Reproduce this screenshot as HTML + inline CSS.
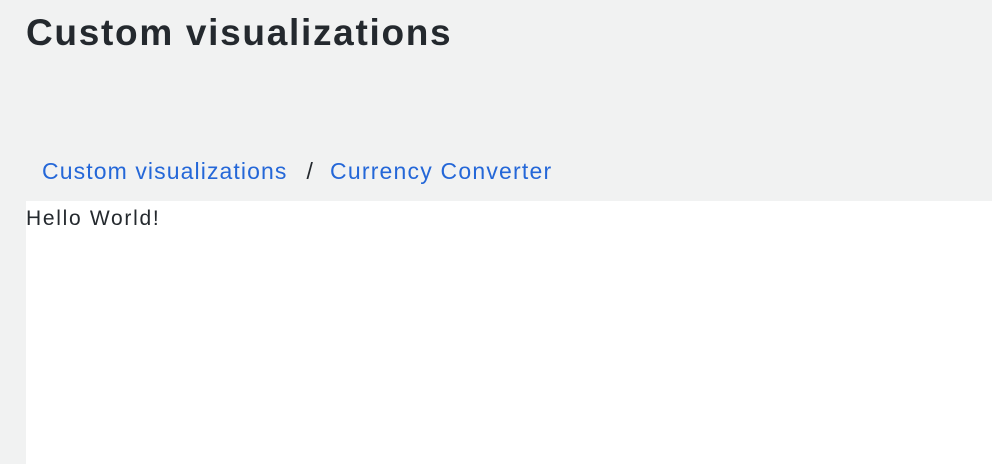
<!DOCTYPE html>
<html><head><style>
html,body{margin:0;padding:0;width:992px;height:464px;overflow:hidden;background:#f1f2f2;font-family:"Liberation Sans",sans-serif;}
h1{position:absolute;left:26px;top:12px;margin:0;font-size:37px;font-weight:bold;color:#24292e;letter-spacing:1.7px;}
.bc{position:absolute;left:42px;top:158px;font-size:23px;color:#2467d8;letter-spacing:1.1px;}
.bc .s{color:#24292e;margin:0 16px 0 19px;}
.bc .c{letter-spacing:1.2px;}
.panel{position:absolute;left:26px;top:201px;right:0;bottom:0;background:#fff;}
.panel div{font-size:21px;color:#24292e;margin-top:6px;letter-spacing:1.7px;}
</style></head><body>
<h1>Custom visualizations</h1>
<div class="bc">Custom visualizations<span class="s">/</span><span class="c">Currency Converter</span></div>
<div class="panel"><div>Hello World!</div></div>
</body></html>
